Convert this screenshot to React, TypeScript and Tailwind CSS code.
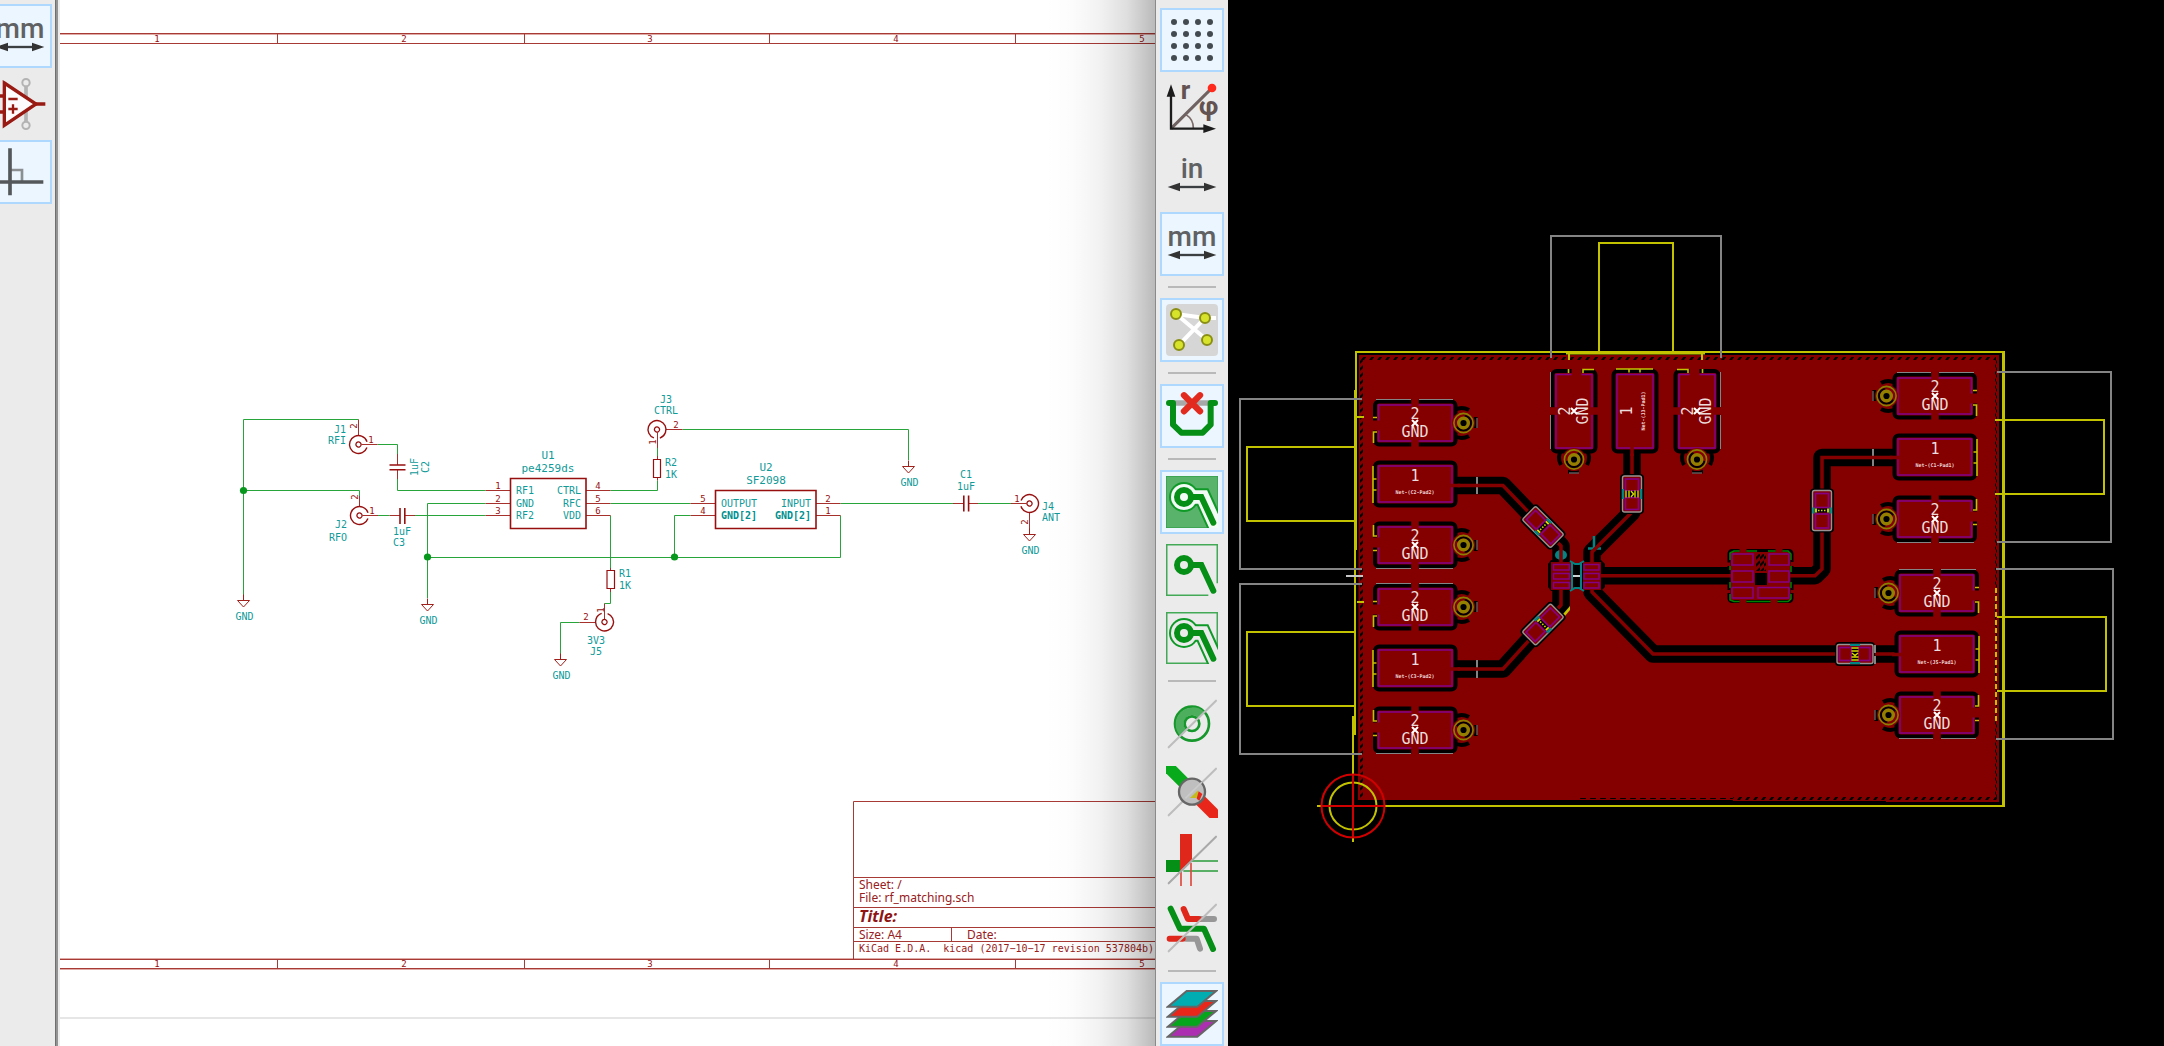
import type { ReactNode } from 'react';

/* ---------- Toolbar ---------- */

type ToolProps = { label: string; active?: boolean; children: ReactNode };

function Tool({ label, active = false, children }: ToolProps) {
  return (
    <button
      type="button"
      aria-label={label}
      aria-pressed={active}
      className={
        active
          ? 'flex size-16 shrink-0 items-center justify-center border-2 border-[#afd8ff] bg-[#ebf6ff]'
          : 'flex size-16 shrink-0 items-center justify-center border-2 border-transparent'
      }
    >
      {children}
    </button>
  );
}

function Icon({ bleed = false, children }: { bleed?: boolean; children: ReactNode }) {
  return (
    <svg
      viewBox="0 0 156 156"
      className={bleed ? 'size-[52px] shrink-0 overflow-visible' : 'size-[52px] shrink-0'}
      aria-hidden="true"
    >
      {children}
    </svg>
  );
}

const Divider = () => <hr className="my-1.5 h-0.5 w-12 shrink-0 border-0 bg-[#b9b9b9]" />;

function UnitIcon({ unit }: { unit: string }) {
  return (
    <Icon bleed>
      <text
        x="78"
        y="84"
        textAnchor="middle"
        className="fill-[#5f6163] font-[Roboto,sans-serif] text-[84px] font-medium"
      >
        {unit}
      </text>
      <path d="M30 111H126" stroke="#3c3f41" strokeWidth="7" />
      <path d="M5 111L42 98V124ZM151 111L114 98V124Z" fill="#333" />
    </Icon>
  );
}

const Slash = ({ color = '#bdbdbd' }: { color?: string }) => (
  <path d="M8 148L150 8" stroke={color} strokeWidth="6" strokeLinecap="round" />
);

const TRACK = 'M54 63H106L142 140';

function ZoneOutline({ halo }: { halo: string }) {
  return (
    <>
      <path d="M54 63H110L152 155" fill="none" stroke="#0f9a28" strokeWidth="53" />
      <circle cx="54" cy="63" r="45" fill="#0f9a28" />
      <path d="M54 63H110L154 160" fill="none" stroke={halo} strokeWidth="41" />
      <circle cx="54" cy="63" r="39" fill={halo} />
    </>
  );
}

function ZoneTrack({ hole }: { hole: string }) {
  return (
    <>
      <path d={TRACK} fill="none" stroke="#058f17" strokeWidth="18" strokeLinecap="round" />
      <circle cx="54" cy="63" r="21" fill={hole} stroke="#058f17" strokeWidth="18" />
    </>
  );
}

const LAYERS = [
  { dy: 90, fill: '#ab2fb0' },
  { dy: 60, fill: '#06a61c' },
  { dy: 30, fill: '#e8271a' },
  { dy: 0, fill: '#02adb2' },
];

function SchematicToolbar() {
  return (
    <nav
      aria-label="Schematic tools"
      className="flex w-[55px] shrink-0 flex-col items-end gap-1 overflow-hidden bg-[#ebebeb] pt-1 pr-[3px]"
    >
      <Tool label="Millimetres" active>
        <UnitIcon unit="mm" />
      </Tool>
      <Tool label="Show hidden pins">
        <Icon>
          <path d="M96 14V142" stroke="#b3b3b3" strokeWidth="11" />
          <circle cx="96" cy="14" r="11" fill="#ebebeb" stroke="#b3b3b3" strokeWidth="6" />
          <circle cx="96" cy="142" r="11" fill="#ebebeb" stroke="#b3b3b3" strokeWidth="6" />
          <path d="M31 15L126 78L31 142Z" fill="#fdfbfb" stroke="#991a12" strokeWidth="10" />
          <path d="M126 78H154M4 54H31M4 102H31" stroke="#991a12" strokeWidth="11" />
          <path d="M43 63H71M43 93H71M57 79V107" stroke="#991a12" strokeWidth="7" />
        </Icon>
      </Tool>
      <Tool label="Right angle wires" active>
        <Icon>
          <path d="M48 72H84V108" fill="none" stroke="#8b8f92" strokeWidth="8" />
          <path d="M48 7V148M6 108H148" stroke="#54585b" strokeWidth="11" />
        </Icon>
      </Tool>
    </nav>
  );
}

function BoardToolbar() {
  return (
    <nav
      aria-label="Board tools"
      className="flex w-[72px] shrink-0 flex-col items-center gap-1 bg-[#ebebeb] pt-2"
    >
      <Tool label="Show grid" active>
        <Icon>
          {[24, 60, 96, 132].map((y) =>
            [24, 60, 96, 132].map((x) => <circle key={`${x}-${y}`} cx={x} cy={y} r="9" fill="#444b50" />),
          )}
        </Icon>
      </Tool>
      <Tool label="Polar coordinates">
        <Icon bleed>
          <path d="M15 140L136 20" stroke="#6f6261" strokeWidth="9" />
          <path d="M60 98Q82 112 82 138" fill="none" stroke="#7b6b6a" strokeWidth="5" />
          <path d="M15 36V140H120" fill="none" stroke="#1c1c1c" strokeWidth="7" />
          <path d="M15 7L28 44H2ZM150 140L112 127V153Z" fill="#1c1c1c" />
          <text x="44" y="52" className="fill-[#625251] font-[Roboto,sans-serif] text-[78px] font-bold">
            r
          </text>
          <text
            x="128"
            y="98"
            textAnchor="middle"
            className="fill-[#625251] font-[Roboto,sans-serif] text-[78px] font-bold"
          >
            φ
          </text>
          <circle cx="138" cy="18" r="13" fill="#ff2a1b" />
        </Icon>
      </Tool>
      <Tool label="Inches">
        <UnitIcon unit="in" />
      </Tool>
      <Tool label="Millimetres" active>
        <UnitIcon unit="mm" />
      </Tool>
      <Divider />
      <Tool label="Show ratsnest" active>
        <Icon>
          <rect width="156" height="156" rx="12" fill="#d6d6d6" />
          <path d="M30 30L117 42L39 123M30 30L123 108M117 42H150" fill="none" stroke="#fff" strokeWidth="12" />
          {[
            [30, 30],
            [117, 42],
            [123, 108],
            [39, 123],
          ].map(([x, y]) => (
            <circle key={x} cx={x} cy={y} r="15" fill="#d6e32a" stroke="#8a8f14" strokeWidth="6" />
          ))}
        </Icon>
      </Tool>
      <Divider />
      <Tool label="Auto delete old tracks" active>
        <Icon>
          <path d="M20 39H136" stroke="#a8a8a8" strokeWidth="17" />
          <path
            d="M9 39H21V104L46 128H110L134 104V39H147"
            fill="none"
            stroke="#058f17"
            strokeWidth="18"
            strokeLinecap="round"
            strokeLinejoin="round"
          />
          <path d="M54 16L102 64M102 16L54 64" stroke="#e32a1e" strokeWidth="19" strokeLinecap="round" />
        </Icon>
      </Tool>
      <Divider />
      <Tool label="Show filled zones" active>
        <Icon>
          <rect x="1" y="1" width="154" height="154" fill="#59b36b" stroke="#2e9f45" strokeWidth="3" />
          <ZoneOutline halo="#f2fbf6" />
          <ZoneTrack hole="#f2fbf6" />
        </Icon>
      </Tool>
      <Tool label="Hide filled zones">
        <Icon>
          <path d="M127 154H2V2H154V118" fill="none" stroke="#43a956" strokeWidth="5" />
          <ZoneTrack hole="#ebebeb" />
        </Icon>
      </Tool>
      <Tool label="Show zone outlines">
        <Icon>
          <rect x="2" y="2" width="152" height="152" fill="none" stroke="#43a956" strokeWidth="5" />
          <ZoneOutline halo="#ebebeb" />
          <ZoneTrack hole="#ebebeb" />
        </Icon>
      </Tool>
      <Divider />
      <Tool label="Outline vias">
        <Icon>
          <circle cx="78" cy="77" r="51" fill="none" stroke="#17982c" strokeWidth="8" />
          <path d="M42 113A51 51 0 0 1 114 41L96 59A25 25 0 0 0 60 95Z" fill="#4dae5d" />
          <circle cx="78" cy="77" r="22" fill="#ebebeb" stroke="#17982c" strokeWidth="8" />
          <Slash />
        </Icon>
      </Tool>
      <Tool label="Outline tracks">
        <Icon>
          <path d="M-10 -14L60 56" stroke="#07aa1b" strokeWidth="36" />
          <path d="M84 84L170 170" stroke="#e8271a" strokeWidth="36" />
          <Slash />
          <circle cx="78" cy="77" r="39" fill="#bfbfbf" stroke="#666" strokeWidth="7" />
          <path d="M97 72V96H72Z" fill="#c3bc1e" />
          <path d="M92 98L98 76L109 84L100 104Z" fill="#e8271a" />
          <path d="M58 97L108 48" stroke="#cbcbcb" strokeWidth="5" />
        </Icon>
      </Tool>
      <Tool label="High contrast">
        <Icon>
          <path d="M0 78H46V112L40 114H0Z" fill="#058f17" />
          <path d="M42 0H78V78L42 112Z" fill="#e0271b" />
          <path d="M76 81H156M52 111H156" stroke="#2a9c3a" strokeWidth="5" />
          <path d="M45 112V156M75 86V156" stroke="#df4a40" strokeWidth="5" />
          <Slash color="#a9a9a9" />
        </Icon>
      </Tool>
      <Tool label="Outline graphics">
        <Icon>
          <g fill="none" strokeWidth="18" strokeLinecap="round" strokeLinejoin="round">
            <path d="M98 51H144M60 110H92L102 140" stroke="#979797" />
            <path d="M53 21L66 51H98M11 110H50" stroke="#e0271b" />
            <path d="M14 20L42 80H114L141 141" stroke="#058f17" />
          </g>
          <Slash />
        </Icon>
      </Tool>
      <Divider />
      <Tool label="Layers manager" active>
        <Icon>
          {LAYERS.map((l) => (
            <path
              key={l.dy}
              d="M62 9H150L94 56H6Z"
              transform={`translate(0 ${l.dy})`}
              fill={l.fill}
              stroke="#666"
              strokeWidth="6"
            />
          ))}
        </Icon>
      </Tool>
    </nav>
  );
}

/* ---------- Schematic ---------- */

const MONO = "font-['DejaVu_Sans_Mono',monospace]";
const TEAL = `fill-[#109a98] text-[10px] ${MONO}`;
const TEAL_BOLD = `fill-[#00908e] text-[10px] font-bold ${MONO}`;
const TEAL_NAME = `fill-[#109a98] text-[11px] ${MONO}`;
const PIN = `fill-[#960f0f] text-[9px] ${MONO}`;
const BLOCK = "fill-[#982020] text-[12px] font-['Noto_Sans',sans-serif]";
const BLOCK_MONO = `fill-[#982020] text-[10px] whitespace-pre ${MONO}`;

type Label = [text: string, x: number, y: number, anchor?: 'start' | 'middle' | 'end', vertical?: boolean];

function Labels({ items, className }: { items: Label[]; className: string }) {
  return (
    <>
      {items.map(([text, x, y, anchor = 'middle', vertical]) => (
        <text
          key={`${text}-${x}-${y}`}
          x={x}
          y={y}
          textAnchor={anchor}
          transform={vertical ? `rotate(-90 ${x} ${y})` : undefined}
          className={className}
        >
          {text}
        </text>
      ))}
    </>
  );
}

const WIRES = [
  'M243.5 595V419.5H358.5',
  'M243.5 490.5H359.5V496',
  'M377.5 444.5H397.5V454',
  'M397.5 479V490.5H485.5',
  'M378 515.5H389.5M415 515.5H485.5',
  'M485.5 503.5H427.5V598',
  'M427 557.5H840.5V515.5',
  'M610.5 490.5H657.5V480.5M657.5 456V448',
  'M610.5 503.5H690.5',
  'M610.5 515.5V568M610.5 592V603.5H604.5',
  'M579.5 622.5H560.5V654',
  'M682.5 429.5H908.5V460',
  'M690.5 515.5H674.5V557',
  'M840.5 503.5H953M978 503.5H1011',
];

const PINS = [
  'M358.5 419.5V435.5M361.5 444.5H377.5',
  'M397.5 454V465M397.5 470V479',
  'M359.5 496V506.5M362.5 515.5H378M389.5 515.5H400M405 515.5H415',
  'M485.5 490.5H510.5M485.5 503.5H510.5M485.5 515.5H510.5',
  'M586 490.5H610.5M586 503.5H610.5M586 515.5H610.5',
  'M657.5 480.5V477.5M657.5 459.5V456M657.5 448V432.5M666 429.5H682.5',
  'M610.5 568V570.5M610.5 588.5V592M604.5 603.5V619.5M595.5 622.5H579.5',
  'M690.5 503.5H715.5M690.5 515.5H715.5M816 503.5H840.5M816 515.5H840.5',
  'M953 503.5H963M969 503.5H978M1011 503.5H1026.5M1029.5 512.5V534',
];

const COAX = [
  { x: 358.5, y: 444.5, open: 0 },
  { x: 359.5, y: 515.5, open: 0 },
  { x: 657, y: 429.5, open: 90 },
  { x: 1029.5, y: 503.5, open: 180 },
  { x: 604.5, y: 622, open: 270 },
];

const GROUNDS = [
  { x: 243.5, y: 600.5 },
  { x: 427.5, y: 604.5 },
  { x: 560.5, y: 659.5 },
  { x: 908.5, y: 466.5 },
  { x: 1029.5, y: 534.5 },
];

const TEXTS: Label[] = [
  ['J1', 346, 433, 'end'],
  ['RFI', 346, 444, 'end'],
  ['J2', 347, 528, 'end'],
  ['RFO', 347, 541, 'end'],
  ['1uF', 418, 467, 'middle', true],
  ['C2', 429, 467, 'middle', true],
  ['1uF', 402, 535],
  ['C3', 399, 546],
  ['RF1', 516, 494, 'start'],
  ['GND', 516, 507, 'start'],
  ['RF2', 516, 519, 'start'],
  ['CTRL', 581, 494, 'end'],
  ['RFC', 581, 507, 'end'],
  ['VDD', 581, 519, 'end'],
  ['J3', 666, 403],
  ['CTRL', 666, 414],
  ['R2', 665, 466, 'start'],
  ['1K', 665, 478, 'start'],
  ['R1', 619, 577, 'start'],
  ['1K', 619, 589, 'start'],
  ['3V3', 596, 644],
  ['J5', 596, 655],
  ['OUTPUT', 721, 507, 'start'],
  ['INPUT', 811, 507, 'end'],
  ['C1', 966, 478],
  ['1uF', 966, 490],
  ['J4', 1042, 510, 'start'],
  ['ANT', 1042, 521, 'start'],
];

const PIN_NUMBERS: Label[] = [
  ['2', 357, 426, 'middle', true],
  ['1', 371, 443],
  ['2', 358, 497, 'middle', true],
  ['1', 372, 514],
  ['1', 498, 489],
  ['2', 498, 502],
  ['3', 498, 514],
  ['4', 598, 489],
  ['5', 598, 502],
  ['6', 598, 514],
  ['2', 676, 428],
  ['1', 656, 442, 'middle', true],
  ['5', 703, 502],
  ['4', 703, 514],
  ['2', 828, 502],
  ['1', 828, 514],
  ['1', 1017, 502],
  ['2', 1028, 522, 'middle', true],
  ['2', 586, 620],
  ['1', 604, 610, 'middle', true],
];

const FRAME_NUMBERS: Label[] = [157, 404, 650, 896, 1142].flatMap((x, i): Label[] => [
  [String(i + 1), x, 42],
  [String(i + 1), x, 967],
]);

function Schematic() {
  return (
    <main className="relative min-w-0 flex-[1096_1_0%] overflow-hidden bg-white">
      <svg
        viewBox="60 0 1096 1046"
        preserveAspectRatio="xMinYMin slice"
        className="absolute inset-0 size-full"
        role="img"
        aria-label="RF matching schematic"
      >
        <path d="M60 1018H1156" stroke="#dedede" strokeWidth="1.5" />
        <g fill="none" stroke="#a83a36">
          <path d="M60 33.5H1156M60 43.5H1156M60 959.5H1156M60 968.5H1156" />
          <path d="M60 34.5H1156M60 958.5H1156M60 969.5H1156" stroke="#dfa9a6" />
          <path d="M277.5 34V43M524.5 34V43M769.5 34V43M1015.5 34V43" />
          <path d="M277.5 959V969M524.5 959V969M769.5 959V969M1015.5 959V969" />
          <path d="M1156 801.5H853.5V959M853.5 877.5H1156M853.5 907.5H1156M853.5 927.5H1156M853.5 941.5H1156M951.5 927V941" />
        </g>
        <Labels items={FRAME_NUMBERS} className={PIN} />
        <text x="859" y="889" className={BLOCK}>Sheet: /</text>
        <text x="859" y="902" className={BLOCK}>File: rf_matching.sch</text>
        <text
          x="859"
          y="922"
          className="fill-[#8f1414] font-['Noto_Sans',sans-serif] text-[16px] font-bold italic"
        >
          Title:
        </text>
        <text x="859" y="939" className={BLOCK}>Size: A4</text>
        <text x="967" y="939" className={BLOCK}>Date:</text>
        <text x="859" y="952" className={BLOCK_MONO}>{'KiCad E.D.A.  kicad (2017−10−17 revision 537804b)'}</text>

        <path d={WIRES.join('')} fill="none" stroke="#27a53b" strokeWidth="1" />
        <path d={PINS.join('')} fill="none" stroke="#a5302c" strokeWidth="1" />
        {[
          [243.5, 490.5],
          [427.5, 557],
          [674.5, 557],
        ].map(([x, y]) => (
          <circle key={x} cx={x} cy={y} r="3.6" fill="#06981c" />
        ))}

        <g fill="none" stroke="#970f0f">
          {COAX.map((c) => (
            <g key={`${c.x}-${c.y}`} transform={`translate(${c.x} ${c.y}) rotate(${c.open + 20})`}>
              <circle r="9" strokeWidth="1.4" strokeDasharray="50.2 6.4" />
              <circle r="2.6" strokeWidth="1.3" />
            </g>
          ))}
          <path
            d="M389.5 465H405.5M389.5 469.7H405.5M400 508V524M404.8 508V524M963.8 495.5V511.5M968.6 495.5V511.5"
            strokeWidth="1.6"
          />
          <path d="M510.5 478.5H586V528.5H510.5ZM715.5 490.5H816V528.5H715.5Z" strokeWidth="1.6" />
          <path d="M653.5 459.5H660.5V477.5H653.5ZM607 570.5H614.5V588.5H607Z" strokeWidth="1.2" />
        </g>
        {GROUNDS.map(({ x, y }) => (
          <g key={x}>
            <path
              d={`M${x} ${y - 6}V${y}M${x - 6} ${y}H${x + 6}L${x} ${y + 6.5}Z`}
              fill="none"
              stroke="#a0201c"
            />
            <text x={x + 1} y={y + 19} textAnchor="middle" className={TEAL}>
              GND
            </text>
          </g>
        ))}

        <Labels items={TEXTS} className={TEAL} />
        <Labels
          items={[
            ['U1', 548, 459],
            ['pe4259ds', 548, 472],
            ['U2', 766, 471],
            ['SF2098', 766, 484],
          ]}
          className={TEAL_NAME}
        />
        <Labels
          items={[
            ['GND[2]', 721, 519, 'start'],
            ['GND[2]', 811, 519, 'end'],
          ]}
          className={TEAL_BOLD}
        />
        <Labels items={PIN_NUMBERS} className={PIN} />
      </svg>
      <div className="absolute inset-y-0 right-0 w-28 border-r border-[#8a8a8a] bg-[linear-gradient(to_right,transparent,rgba(0,0,0,0.01)_25%,rgba(0,0,0,0.05)_50%,rgba(0,0,0,0.13)_75%,rgba(0,0,0,0.27))]" />
    </main>
  );
}

/* ---------- Board ---------- */

const COPPER = '#840000';
const SILK = '#c2c200';
const GRAY = '#848484';
const PASTE = '#840084';
const PAD_TEXT = `fill-[#ecdcdc] text-[15px] ${MONO}`;
const NET_TEXT = `fill-[#f0d8d8] text-[5px] font-bold ${MONO}`;

type PadProps = {
  x: number;
  y: number;
  side: 'left' | 'right' | 'top';
  flip?: boolean;
  net?: string;
};

const SIDE = { left: '', right: 'scale(-1 1)', top: 'rotate(90)' };

function EdgePad({ x, y, side, flip = false, net }: PadProps) {
  return (
    <g transform={`translate(${x} ${y})`}>
      <g transform={`${SIDE[side]} ${flip ? 'scale(1 -1)' : ''}`} fill="none">
        {!net && (
          <>
            <path
              d="M38 -12A15 15 0 0 1 54 -13M38 12A15 15 0 0 0 54 13M60.5 -6V5"
              stroke="#000"
              strokeWidth="4"
            />
            <path d="M62 -5V5" stroke={GRAY} />
          </>
        )}
        <rect x="-40" y="-21.5" width="80.5" height="43" rx="4" stroke="#000" strokeWidth="4" fill={COPPER} />
        {net ? (
          <path d="M-42 -18V19M-42 -5H-38.5M-42 6H-38.5" stroke={SILK} strokeWidth="1.6" />
        ) : (
          <>
            <path d="M-39 -23.5H-4M4 -23.5H38" stroke={GRAY} />
            <path d="M-42 -5.5H-38M-38 9H-41.5V20" stroke={SILK} strokeWidth="1.6" />
          </>
        )}
        <rect x="-36.5" y="-18" width="73.5" height="36" stroke={PASTE} strokeWidth="1.6" />
        {!net && (
          <>
            <path d="M0 -24.5V-15M0 15V24.5" stroke={COPPER} strokeWidth="7.5" />
            <path d="M-43 2.5H-34" stroke={COPPER} strokeWidth="10" />
            <circle cx="48.5" r="11.5" fill={COPPER} />
            <circle
              cx="48.5"
              r="7.5"
              stroke="#000"
              strokeWidth="2"
              strokeDasharray="30 17"
              transform="rotate(-80 48.5 0)"
            />
            <circle cx="48.5" r="9.6" stroke="#8a8000" strokeWidth="1.6" />
            <circle cx="48.5" r="4.8" stroke="#948000" strokeWidth="3.4" fill="#000" />
          </>
        )}
      </g>
      <g transform={side === 'top' ? 'rotate(-90)' : undefined} textAnchor="middle">
        <text y={net ? -3 : -4} className={PAD_TEXT}>
          {net ? '1' : '2'}
        </text>
        {net ? (
          <text y="10" className={NET_TEXT}>
            {net}
          </text>
        ) : (
          <>
            <text y="14" className={PAD_TEXT}>
              GND
            </text>
            <path d="M-3 -3L3 3M3 -3L-3 3" stroke="#fff" strokeWidth="2" />
          </>
        )}
      </g>
    </g>
  );
}

const PADS: PadProps[] = [
  { x: 1415, y: 423, side: 'left' },
  { x: 1415, y: 484, side: 'left', net: 'Net-(C2-Pad2)' },
  { x: 1415, y: 545, side: 'left', flip: true },
  { x: 1415, y: 607, side: 'left' },
  { x: 1415, y: 668, side: 'left', net: 'Net-(C3-Pad2)' },
  { x: 1415, y: 730, side: 'left', flip: true },
  { x: 1935, y: 396, side: 'right' },
  { x: 1935, y: 457, side: 'right', net: 'Net-(C1-Pad1)' },
  { x: 1935, y: 519, side: 'right', flip: true },
  { x: 1937, y: 593, side: 'right' },
  { x: 1937, y: 654, side: 'right', net: 'Net-(J5-Pad1)' },
  { x: 1937, y: 715, side: 'right', flip: true },
  { x: 1574, y: 411, side: 'top', flip: true },
  { x: 1635, y: 411, side: 'top', net: 'Net-(J3-Pad1)' },
  { x: 1697, y: 411, side: 'top' },
];

const TRACKS = [
  'M1454 485.5H1503L1561 546V566',
  'M1454 669H1503L1561 605V585',
  'M1632 445V512L1592 552V566',
  'M1595 575.7H1740',
  'M1592 588V592L1653 654H1900',
  'M1785 575.7H1815L1822 569V457.5H1897',
];

type ChipProps = { x: number; y: number; angle: number; length?: number; resistor?: boolean };

function Chip({ x, y, angle, length = 40, resistor = false }: ChipProps) {
  const half = length / 2;
  const padLen = half - 6;
  return (
    <g transform={`translate(${x} ${y}) rotate(${angle})`} fill="none">
      <rect x="-12" y={-half - 2} width="24" height={length + 4} rx="4" fill="#000" />
      <rect x="-9.5" y={-half} width="19" height={length} rx="2" fill={COPPER} stroke="#9a9292" strokeWidth="1.4" />
      <rect x="-6.5" y={-half + 3} width="13" height={padLen} stroke={PASTE} strokeWidth="1.7" />
      <rect x="-6.5" y="3.5" width="13" height={padLen} stroke={PASTE} strokeWidth="1.7" />
      {resistor ? (
        <>
          <rect x="-7" y="-3" width="14" height="6" fill="#000" />
          <path d="M-9 -5V5M9 -5V5" stroke="#008484" strokeWidth="2" />
          <path
            d="M-6 -3.5V3.5M6 -3.5V3.5M-3 -3.5V3.5M3 -3.5V3.5M-1 -3L1.5 0L-1 3"
            stroke="#d8d800"
            strokeWidth="1.4"
          />
        </>
      ) : (
        <>
          <rect x="-7" y="-2" width="14" height="4" fill="#000" />
          <path d="M-8.5 -3V3M8.5 -3V3" stroke="#008484" strokeWidth="2.5" />
          <path d="M-6 -2V2M6 -2V2" stroke="#e0e000" strokeWidth="1.8" />
          <path d="M-4 0H4" stroke="#d8d800" strokeWidth="1.6" strokeDasharray="1.5 1.5" />
        </>
      )}
    </g>
  );
}

function Board() {
  return (
    <main className="relative min-w-0 flex-[936_1_0%] overflow-hidden bg-black">
      <svg
        viewBox="1228 0 936 1046"
        preserveAspectRatio="xMinYMin slice"
        className="absolute inset-0 size-full"
        role="img"
        aria-label="RF matching circuit board"
      >
        <defs>
          <pattern id="hatchTop" width="8" height="4" patternUnits="userSpaceOnUse">
            <path d="M1 4L4 0H7L4 4Z" fill="#000" />
          </pattern>
          <pattern id="hatchSide" width="4" height="7" patternUnits="userSpaceOnUse">
            <path d="M0 4L4 0V3L0 7Z" fill="#000" />
          </pattern>
        </defs>

        {/* Board outline */}
        <path d="M1356 352H2003.5V806H1353" fill="none" stroke={SILK} strokeWidth="2" />
        <path d="M2003.5 351V807" stroke={SILK} strokeWidth="3" />
        <path d="M1356 351V550M1355 390V735M1353 716V842M1317 806H1400" stroke={SILK} strokeWidth="2" />
        <path d="M1566 353H1705" stroke={SILK} strokeWidth="3" />

        {/* Copper zone */}
        <path d="M1359 355H1999V802H1886V801H1733V800H1358Z" fill={COPPER} />
        <rect x="1361" y="357" width="635" height="3" fill="url(#hatchTop)" />
        <rect x="1360" y="357" width="3" height="441" fill="url(#hatchSide)" />
        <rect x="1995" y="357" width="2" height="442" fill="url(#hatchSide)" />
        <path d="M1580 798.5H1733" stroke="#000" strokeWidth="1" strokeDasharray="6 4" />
        <rect x="1733" y="797" width="264" height="3" fill="url(#hatchTop)" />
        <path d="M1996 588V722" stroke={SILK} strokeWidth="2" strokeDasharray="5 3" />

        {/* Connector bodies */}
        <g fill="none" stroke={GRAY} strokeWidth="2">
          <path d="M1362 399H1240V569H1362M1362 584H1240V754H1362" />
          <path d="M1551 358V236H1721V358" />
          <path d="M1997 372H2111V542H1997M1996 569H2113V739H1996" />
        </g>
        <g fill="none" stroke={SILK} strokeWidth="2">
          <path d="M1355 447H1247V521H1355M1355 632H1247V706H1355" />
          <path d="M1599 352V243H1673V352M1569 354V360M1702 354V360" />
          <path d="M1995 420H2104V494H1995M1997 617H2106V691H1997" />
          <path d="M1356 417H1364M1357 602H1364" />
        </g>
        <path d="M1346 576H1363" stroke="#c6c6c6" strokeWidth="2" />

        {/* Tracks */}
        <path d={TRACKS.join('')} fill="none" stroke="#000" strokeWidth="17.5" strokeLinejoin="round" />
        <path d="M1477 477V494M1477 660V678M1873 449V466" stroke={GRAY} strokeWidth="2" />
        <ellipse cx="1561" cy="555" rx="6" ry="5" fill="#008484" />
        <path d="M1594 536V548M1588 548.5H1601" stroke="#008484" strokeWidth="2.5" />
        <path d="M1563 614L1570 606V610L1565 616Z" fill={SILK} />

        {/* Antenna switch */}
        <path
          d="M1551 560H1568L1572 564H1580L1584 560H1601L1605 564V587L1601 591H1584L1580 587H1572L1568 591H1551L1548 587V564Z"
          fill="#000"
        />
        <rect x="1551" y="562" width="20" height="28" fill={COPPER} />
        <rect x="1583" y="562" width="18" height="28" fill={COPPER} />
        <path
          d="M1572 562V590M1581 562V590M1570 561L1575 564H1579L1584 561M1570 591L1575 588H1579L1584 591"
          fill="none"
          stroke="#008484"
          strokeWidth="2"
        />
        <path d="M1573 576H1580" stroke="#d0d0d0" strokeWidth="2" />

        {/* Filter */}
        <rect x="1729" y="550.5" width="63" height="51" rx="3" fill={COPPER} stroke="#000" strokeWidth="3" />
        <path
          d="M1730 560V553L1734 551H1757M1768 551H1788L1791 554V560M1791 566V572M1730 566V570M1730 582V588M1791 582V588M1730 594V600L1734 601.5H1788L1791 599V594"
          fill="none"
          stroke="#008400"
          strokeWidth="1.5"
        />
        <path d="M1743 548V554M1779 548V554M1743 598V605M1774 598V605" stroke={COPPER} strokeWidth="7" />
        <path d="M1728 562.5V566M1728 590V593M1793 562V566M1793 590V593" stroke={COPPER} strokeWidth="4" />
        <rect x="1756" y="554" width="10" height="17" fill="url(#hatchSide)" />
        <rect x="1755" y="573" width="12" height="12" fill="#000" />

        <path d={TRACKS.join('')} fill="none" stroke={COPPER} strokeWidth="3.5" />

        <g fill="none" stroke={PASTE} strokeWidth="1.5">
          {[564.5, 573.5, 582.5].map((y) => (
            <g key={y}>
              <rect x="1553.5" y={y} width="16" height="5.5" />
              <rect x="1584" y={y} width="15" height="5.5" />
            </g>
          ))}
          {[554, 571].map((y) => (
            <g key={y}>
              <rect x="1732" y={y} width="21" height="11" />
              <rect x="1769" y={y} width="20" height="11" />
            </g>
          ))}
          <rect x="1732" y="587.5" width="21" height="10.5" />
          <rect x="1758" y="587.5" width="31" height="10.5" />
        </g>

        <Chip x={1543} y={527} angle={-45} />
        <Chip x={1543} y={624.5} angle={45} />
        <Chip x={1632} y={494} angle={0} length={36} resistor />
        <Chip x={1822} y={510.5} angle={0} />
        <Chip x={1855} y={654} angle={90} length={36} resistor />
        <path d="M1875 645V653M1875 656V664" stroke={GRAY} strokeWidth="2" />

        {PADS.map((p) => (
          <EdgePad key={`${p.x}-${p.y}`} {...p} />
        ))}
        <path
          d="M1450 485.5H1460M1450 669H1460M1632 445V456M1890 457.5H1900M1892 654.5H1902"
          stroke={COPPER}
          strokeWidth="3.5"
        />

        {/* Origin marker */}
        <circle cx="1353" cy="806" r="23.5" fill="none" stroke={SILK} strokeWidth="2" />
        <circle cx="1353" cy="806" r="31.5" fill="none" stroke="#d00000" strokeWidth="2" />
        <path d="M1321 806H1385M1353 774V838" stroke="#d00000" strokeWidth="2" />
      </svg>
    </main>
  );
}

export default function App() {
  return (
    <div className="flex min-h-screen overflow-hidden bg-black">
      <SchematicToolbar />
      <div className="w-[5px] shrink-0 border-r-2 border-l border-r-[#ececec] border-l-[#6f6f6f] bg-[#939393]" />
      <Schematic />
      <BoardToolbar />
      <Board />
    </div>
  );
}
